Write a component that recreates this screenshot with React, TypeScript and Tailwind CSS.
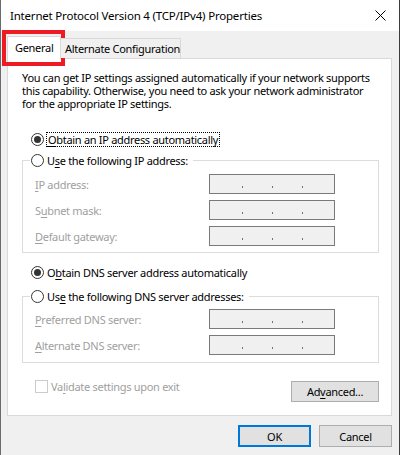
import { ReactNode } from "react";

const font = { fontFamily: '"Noto Sans", "Open Sans", sans-serif' };

const Radio = ({ checked }: { checked?: boolean }) => (
    <span className="w-[13px] h-[13px] rounded-full border border-[#333333] bg-white flex items-center justify-center shrink-0">
        {checked && <span className="w-[7px] h-[7px] rounded-full bg-[#333333]" />}
    </span>
);

const U = ({ children }: { children: ReactNode }) => <span className="underline underline-offset-2">{children}</span>;

const IpBox = () => (
    <div className="w-[126px] h-[20px] border border-[#7a7a7a] bg-[#f0f0f0] flex items-end pb-[5px] pl-[32px] gap-[29px]">
        <span className="w-[1px] h-[2px] bg-[#6d6d8d]" />
        <span className="w-[1px] h-[2px] bg-[#6d6d8d]" />
        <span className="w-[1px] h-[2px] bg-[#6d6d8d]" />
    </div>
);

const FieldRow = ({ label }: { label: ReactNode }) => (
    <div className="flex items-center h-[20px]">
        <span className="w-[186px] pl-[12px] text-[#a0a0a0]">{label}</span>
        <IpBox />
    </div>
);

const App = () => {
    return (
        <div
            className="w-[400px] h-[455px] bg-[#f0f0f0] border-l border-l-[#6b6b6b] border-r border-r-[#3c3c3c] flex flex-col text-[11px] tracking-[-0.3px] leading-[13px] text-black whitespace-nowrap relative overflow-hidden"
            style={font}
        >
            {/* title bar */}
            <div className="h-[31px] bg-white flex items-center justify-between pl-[9px] pr-[10px] shrink-0">
                <span className="text-[11.5px] tracking-[-0.2px]">Internet Protocol Version 4 (TCP/IPv4) Properties</span>
                <svg width="11" height="11" viewBox="0 0 11 11" className="mr-[3px]">
                    <path d="M0.5 0.5 L10.5 10.5 M10.5 0.5 L0.5 10.5" stroke="#000" strokeWidth="1" />
                </svg>
            </div>

            {/* tabs */}
            <div className="flex items-end h-[27px] pl-[6px] shrink-0 relative z-10">
                <div className="w-[54px] h-[23px] bg-white border border-b-0 border-[#d9d9d9] pl-[7px] pt-[4px] -mb-[1px]">General</div>
                <div className="w-[120px] h-[20px] bg-[#f0f0f0] border border-b-0 border-l-0 border-[#d9d9d9] pl-[4px] pt-[3px]">
                    Alternate Configuration
                </div>
            </div>

            {/* panel */}
            <div className="ml-[6px] w-[385px] h-[358px] bg-white border border-[#d9d9d9] flex flex-col shrink-0">
                <div className="mt-[12px] ml-[14px] leading-[13px]">
                    <div>You can get IP settings assigned automatically if your network supports</div>
                    <div>this capability. Otherwise, you need to ask your network administrator</div>
                    <div>for the appropriate IP settings.</div>
                </div>

                <div className="mt-[20px] ml-[23px] flex items-center h-[18px] gap-[2px]">
                    <Radio checked />
                    <span className="border border-dotted border-black px-[1px] h-[15px] leading-[13px]">
                        <U>O</U>btain an IP address automatically
                    </span>
                </div>

                <div className="mt-[12px] ml-[14px] w-[357px] border border-[#dcdcdc] pb-[6px]">
                    <div className="-mt-[10px] ml-[7px] flex items-center h-[18px] gap-[3px] bg-white w-fit pl-[1px] pr-[5px]">
                        <Radio />
                        <span>
                            U<U>s</U>e the following IP address:
                        </span>
                    </div>
                    <div className="mt-[5px] flex flex-col gap-[6px]">
                        <FieldRow label={<><U>I</U>P address:</>} />
                        <FieldRow label={<>S<U>u</U>bnet mask:</>} />
                        <FieldRow label={<><U>D</U>efault gateway:</>} />
                    </div>
                </div>

                <div className="mt-[10px] ml-[23px] flex items-center h-[18px] gap-[3px]">
                    <Radio checked />
                    <span>
                        O<U>b</U>tain DNS server address automatically
                    </span>
                </div>

                <div className="mt-[15px] ml-[14px] w-[357px] border border-[#dcdcdc] pb-[7px]">
                    <div className="-mt-[10px] ml-[7px] flex items-center h-[18px] gap-[3px] bg-white w-fit pl-[1px] pr-[5px]">
                        <Radio />
                        <span>
                            Us<U>e</U> the following DNS server addresses:
                        </span>
                    </div>
                    <div className="mt-[4px] flex flex-col gap-[6px]">
                        <FieldRow label={<><U>P</U>referred DNS server:</>} />
                        <FieldRow label={<><U>A</U>lternate DNS server:</>} />
                    </div>
                </div>

                <div className="mt-[16px] ml-[27px] mr-[12px] flex justify-between items-start">
                    <div className="flex items-center gap-[3px] h-[14px] text-[#a0a0a0]">
                        <span className="w-[13px] h-[13px] border border-[#cccccc] bg-white" />
                        <span>
                            Va<U>l</U>idate settings upon exit
                        </span>
                    </div>
                    <button className="mt-[2px] w-[88px] h-[21px] bg-[#e1e1e1] border border-[#adadad] flex items-center justify-center">
                        Ad<U>v</U>anced...
                    </button>
                </div>
            </div>

            {/* bottom buttons */}
            <div className="mt-[9px] flex justify-end gap-[8px] pr-[7px]">
                <button className="w-[73px] h-[22px] bg-[#e1e1e1] border-2 border-[#0078d7] flex items-center justify-center">OK</button>
                <button className="w-[73px] h-[22px] bg-[#e1e1e1] border border-[#adadad] flex items-center justify-center">Cancel</button>
            </div>

            {/* red highlight overlay */}
            <div className="absolute left-[1px] top-[30px] w-[63px] h-[36px] border-4 border-[#ed1c24] pointer-events-none" />
        </div>
    );
};

export default App;
